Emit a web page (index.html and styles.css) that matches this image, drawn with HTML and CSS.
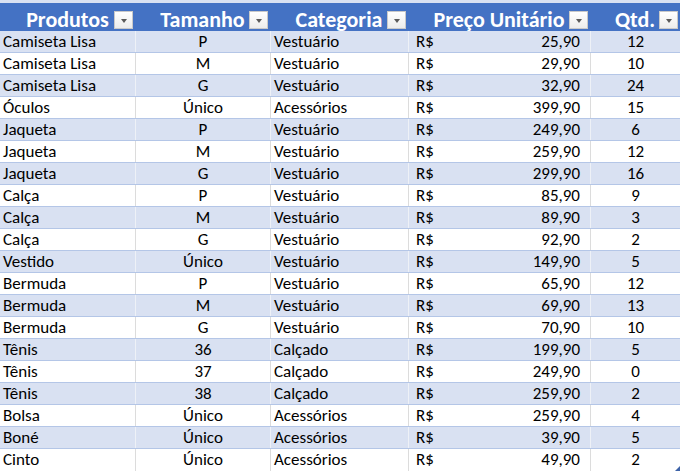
FILE: index.html
```html
<!DOCTYPE html>
<html lang="pt-BR">
<head>
<meta charset="utf-8">
<title>Produtos</title>
<link rel="stylesheet" href="styles.css">
</head>
<body>
<div class="sheet">
  <div class="strip"></div>
  <div class="row head">
    <div class="hc"><span class="lbl">Produtos</span><span class="dd"></span></div>
    <div class="hc"><span class="lbl">Tamanho</span><span class="dd"></span></div>
    <div class="hc"><span class="lbl">Categoria</span><span class="dd"></span></div>
    <div class="hc"><span class="lbl">Preço Unitário</span><span class="dd"></span></div>
    <div class="hc"><span class="lbl">Qtd.</span><span class="dd"></span></div>
  </div>
  <div class="row band"><div class="c l">Camiseta Lisa</div><div class="c m">P</div><div class="c l">Vestuário</div><div class="c p"><span>R$</span><span>25,90</span></div><div class="c m">12</div></div>
  <div class="row"><div class="c l">Camiseta Lisa</div><div class="c m">M</div><div class="c l">Vestuário</div><div class="c p"><span>R$</span><span>29,90</span></div><div class="c m">10</div></div>
  <div class="row band"><div class="c l">Camiseta Lisa</div><div class="c m">G</div><div class="c l">Vestuário</div><div class="c p"><span>R$</span><span>32,90</span></div><div class="c m">24</div></div>
  <div class="row"><div class="c l">Óculos</div><div class="c m">Único</div><div class="c l">Acessórios</div><div class="c p"><span>R$</span><span>399,90</span></div><div class="c m">15</div></div>
  <div class="row band"><div class="c l">Jaqueta</div><div class="c m">P</div><div class="c l">Vestuário</div><div class="c p"><span>R$</span><span>249,90</span></div><div class="c m">6</div></div>
  <div class="row"><div class="c l">Jaqueta</div><div class="c m">M</div><div class="c l">Vestuário</div><div class="c p"><span>R$</span><span>259,90</span></div><div class="c m">12</div></div>
  <div class="row band"><div class="c l">Jaqueta</div><div class="c m">G</div><div class="c l">Vestuário</div><div class="c p"><span>R$</span><span>299,90</span></div><div class="c m">16</div></div>
  <div class="row"><div class="c l">Calça</div><div class="c m">P</div><div class="c l">Vestuário</div><div class="c p"><span>R$</span><span>85,90</span></div><div class="c m">9</div></div>
  <div class="row band"><div class="c l">Calça</div><div class="c m">M</div><div class="c l">Vestuário</div><div class="c p"><span>R$</span><span>89,90</span></div><div class="c m">3</div></div>
  <div class="row"><div class="c l">Calça</div><div class="c m">G</div><div class="c l">Vestuário</div><div class="c p"><span>R$</span><span>92,90</span></div><div class="c m">2</div></div>
  <div class="row band"><div class="c l">Vestido</div><div class="c m">Único</div><div class="c l">Vestuário</div><div class="c p"><span>R$</span><span>149,90</span></div><div class="c m">5</div></div>
  <div class="row"><div class="c l">Bermuda</div><div class="c m">P</div><div class="c l">Vestuário</div><div class="c p"><span>R$</span><span>65,90</span></div><div class="c m">12</div></div>
  <div class="row band"><div class="c l">Bermuda</div><div class="c m">M</div><div class="c l">Vestuário</div><div class="c p"><span>R$</span><span>69,90</span></div><div class="c m">13</div></div>
  <div class="row"><div class="c l">Bermuda</div><div class="c m">G</div><div class="c l">Vestuário</div><div class="c p"><span>R$</span><span>70,90</span></div><div class="c m">10</div></div>
  <div class="row band"><div class="c l">Tênis</div><div class="c m">36</div><div class="c l">Calçado</div><div class="c p"><span>R$</span><span>199,90</span></div><div class="c m">5</div></div>
  <div class="row"><div class="c l">Tênis</div><div class="c m">37</div><div class="c l">Calçado</div><div class="c p"><span>R$</span><span>249,90</span></div><div class="c m">0</div></div>
  <div class="row band"><div class="c l">Tênis</div><div class="c m">38</div><div class="c l">Calçado</div><div class="c p"><span>R$</span><span>259,90</span></div><div class="c m">2</div></div>
  <div class="row"><div class="c l">Bolsa</div><div class="c m">Único</div><div class="c l">Acessórios</div><div class="c p"><span>R$</span><span>259,90</span></div><div class="c m">4</div></div>
  <div class="row band"><div class="c l">Boné</div><div class="c m">Único</div><div class="c l">Acessórios</div><div class="c p"><span>R$</span><span>39,90</span></div><div class="c m">5</div></div>
  <div class="row last"><div class="c l">Cinto</div><div class="c m">Único</div><div class="c l">Acessórios</div><div class="c p"><span>R$</span><span>49,90</span></div><div class="c m">2</div></div>
  <span class="handle"></span>
</div>
</body>
</html>
```
FILE: styles.css
```css
html, body {
  margin: 0;
  padding: 0;
  background: #ffffff;
}
.sheet {
  position: relative;
  width: 680px;
  height: 471px;
  overflow: hidden;
  font-family: Carlito, Calibri, Lato, "Open Sans", sans-serif;
  color: #000;
}
.strip {
  height: 3px;
  background: #d9e1f2;
}
.row {
  display: grid;
  grid-template-columns: 135px 135px 138px 182px 90px;
  height: 22px;
  box-sizing: border-box;
  border-bottom: 1px solid #b4c6e7;
  background: #ffffff;
}
.row.band {
  background: #d9e1f2;
}
.row.last {
  border-bottom: none;
}
.row.head {
  height: 28px;
  background: #4472c4;
  border-bottom: none;
}
.hc {
  position: relative;
  color: #ffffff;
  font-weight: bold;
  font-size: 22px;
  line-height: 22px;
  padding-top: 6px;
  text-align: center;
  white-space: nowrap;
}
.dd {
  position: absolute;
  right: 2px;
  bottom: 2px;
  width: 19px;
  height: 18px;
  box-sizing: border-box;
  border: 1px solid #c9c9c9;
  background: linear-gradient(#ffffff, #ececec);
}
.dd::after {
  content: "";
  position: absolute;
  left: 6px;
  top: 7px;
  border-left: 3.5px solid transparent;
  border-right: 3.5px solid transparent;
  border-top: 4px solid #5a5a5a;
}
.c {
  font-size: 17px;
  line-height: 21px;
  white-space: nowrap;
  border-left: 1px solid #dcdcdc;
  overflow: hidden;
}
.band .c {
  border-left-color: #eef1f7;
}
.c:first-child {
  border-left: none;
}
.c.l {
  padding-left: 3px;
}
.c.m {
  text-align: center;
}
.c.p {
  display: flex;
  justify-content: space-between;
  padding: 0 10px 0 7px;
}
.handle {
  position: absolute;
  right: 0;
  bottom: 0;
  width: 0;
  height: 0;
  border-left: 5px solid transparent;
  border-bottom: 5px solid #3d63a8;
}
```
